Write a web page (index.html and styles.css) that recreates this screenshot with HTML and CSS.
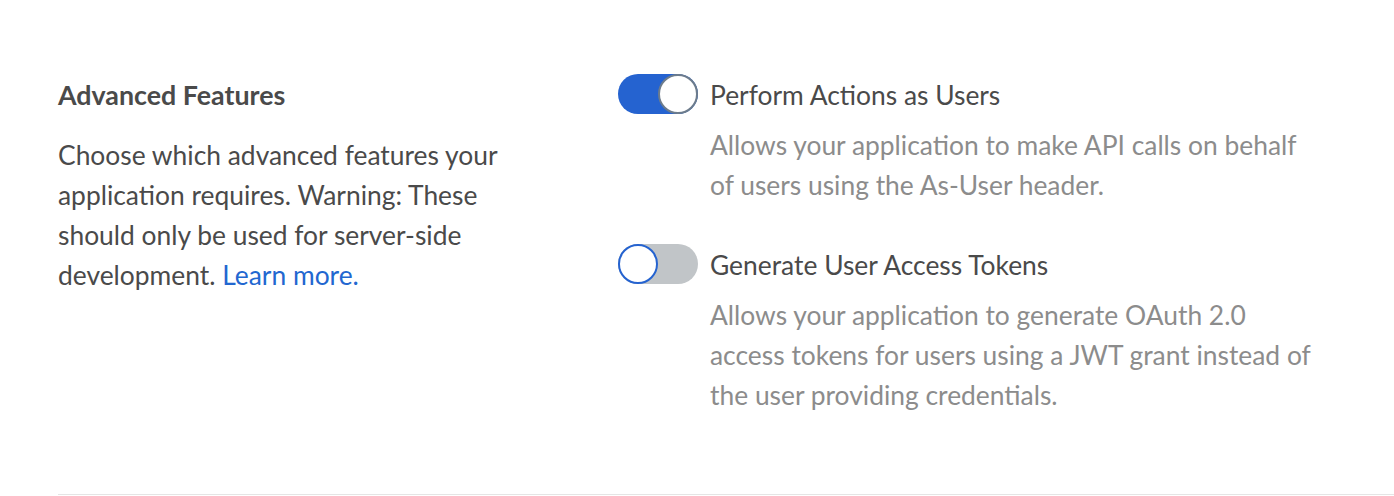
FILE: index.html
```html
<!DOCTYPE html>
<html>
<head>
<meta charset="utf-8">
<link rel="stylesheet" href="styles.css">
</head>
<body>
<section class="section">
  <div class="intro">
    <h2 class="heading">Advanced Features</h2>
    <p class="intro-text">Choose which advanced features your application requires. Warning: These should only be used for server-side development. <a class="link" href="#">Learn more.</a></p>
  </div>
  <div class="options">
    <div class="option">
      <span class="toggle toggle-on"><span class="knob"></span></span>
      <div class="option-body">
        <div class="option-title">Perform Actions as Users</div>
        <p class="option-desc">Allows your application to make API calls on behalf of users using the As-User header.</p>
      </div>
    </div>
    <div class="option">
      <span class="toggle toggle-off"><span class="knob"></span></span>
      <div class="option-body">
        <div class="option-title">Generate User Access Tokens</div>
        <p class="option-desc">Allows your application to generate OAuth 2.0 access tokens for users using a JWT grant instead of the user providing credentials.</p>
      </div>
    </div>
  </div>
</section>
</body>
</html>
```

FILE: styles.css
```css
* { box-sizing: border-box; }
html, body { margin: 0; background: #fff; }
body {
  font-family: Lato, "Open Sans", sans-serif;
  font-size: 26.4px;
  line-height: 40px;
  color: #4a4a4a;
}
.section {
  display: flex;
  margin-left: 58px;
  padding-top: 75px;
  padding-bottom: 79px;
  border-bottom: 1px solid #e5e5e5;
}
.intro {
  width: 560px;
  padding-right: 90px;
}
.heading {
  margin: 0;
  font-size: 26.8px;
  font-weight: 700;
  line-height: 40px;
  color: #4a4a4a;
}
.intro-text {
  margin: 20px 0 0;
}
.link {
  color: #2267d0;
  text-decoration: none;
}
.options {
  display: flex;
  flex-direction: column;
  gap: 40px;
  width: 700px;
}
.option {
  display: flex;
  gap: 12px;
  align-items: flex-start;
}
.toggle {
  position: relative;
  flex: none;
  width: 80px;
  height: 40px;
  margin-top: -1px;
  border-radius: 20px;
}
.toggle-on { background: #2563d0; }
.toggle-off { background: #c1c5c8; }
.knob {
  position: absolute;
  top: 0;
  width: 40px;
  height: 40px;
  border-radius: 50%;
  background: #fff;
}
.toggle-on .knob { right: 0; border: 2px solid #6d7c8c; }
.toggle-off .knob { left: 0; border: 2px solid #2563d0; }
.option-body { width: 604px; }
.option-title {
  color: #4a4a4a;
}
.option-desc {
  margin: 10px 0 0;
  color: #8c8c8c;
}
```
